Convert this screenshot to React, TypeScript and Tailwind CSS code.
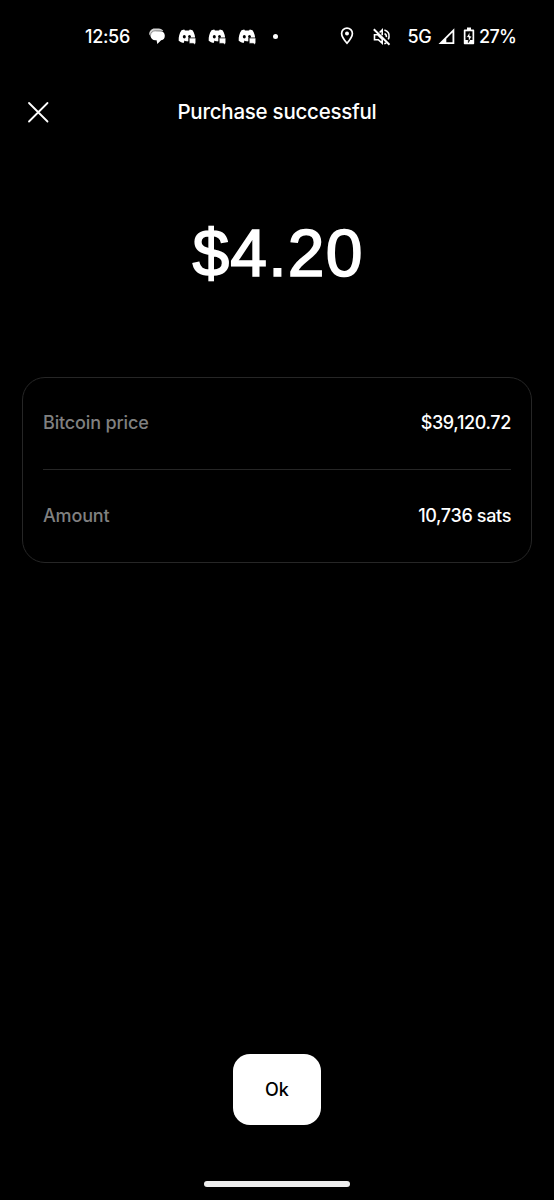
import type { ReactNode } from 'react';

function ChatIcon() {
  return (
    <svg className="ml-[17px] h-[18px] w-[18px] shrink-0" viewBox="0 0 18 18" fill="white">
      <path d="M1.200 7.200C1.200 4 3.600 1.500 6.500 1.500h4.200c2 0 3.700.9 4.600 2.500l-9 1L3.200 10.500Z" fill="#d4d4d4" />
      <path d="M7.300 4.200h5.200a4.600 4.600 0 0 1 .6 9.100l-3.800 3.700-.7-3.700H7.300a4.650 4.650 0 0 1 0-9.300Z" />
      <path d="M2.500 10V8.600C2.500 5.800 4.500 3.800 7.300 3.800h6.500" fill="none" stroke="#444" strokeWidth=".5" />
    </svg>
  );
}

function DiscordIcon() {
  return (
    <svg className="h-[18px] w-[20px] shrink-0" viewBox="0 0 20 18" fill="white">
      <path d="M4.500 2.300 7.200 1.400l.8 1h4l.8-1 2.700.9c1.600 2.400 2.500 5 2.600 7.500h-6.700v4.100l-3.700-.8L6.500 15c-1.700-.3-3.300-1-4.800-2.200-.2-4 .7-7.500 2.800-10.500Z" />
      <ellipse cx="7.300" cy="8.800" rx="1.500" ry="1.700" fill="black" />
      <ellipse cx="12.500" cy="8.500" rx="1.400" ry="1.500" fill="black" />
      <path d="M7 13.100c2 .8 3.400.8 5 .4" fill="none" stroke="black" strokeWidth=".8" />
      <path d="M12.200 10h6.600v5.400h-.8v1.600l-1.600-1.600h-4.200Z" stroke="black" strokeWidth=".6" />
    </svg>
  );
}

function PinIcon() {
  return (
    <svg className="h-[20px] w-[14px] shrink-0" viewBox="0 0 14 20" fill="none" stroke="white" strokeWidth="1.700">
      <path d="M7 17.300C3.600 13.400 1.600 10.400 1.600 7.500a5.400 5.400 0 0 1 10.800 0c0 2.900-2 5.900-5.400 9.800Z" />
      <circle cx="7" cy="7.500" r="2" fill="white" stroke="none" />
    </svg>
  );
}

function MutedIcon() {
  return (
    <svg className="ml-[18px] mt-[1px] h-[20px] w-[20px] shrink-0" viewBox="0 0 20 20" fill="none" stroke="white" strokeWidth="1.600">
      <path d="M2.500 7.700h3.200l4.500 4.500v4L6.300 12.700H2.500Z" />
      <path d="M7.600 5.500 10.200 3v5.200M12.600 6.500c1.300.7 2 2 1.900 3.600M12.400 2.900c3.500 1 5.100 4 4.600 7.200-.1.900-.4 1.600-.8 2.300M12.300 16.800l2-.8" />
      <path d="m1.800 2.300 15.700 15.400" strokeWidth="1.900" />
    </svg>
  );
}

function SignalIcon() {
  return (
    <svg className="ml-[5px] h-[18px] w-[17px] shrink-0" viewBox="0 0 17 18">
      <path d="M.5 17 16.300 1.200V17Z" fill="white" />
      <path d="M8.300 11.700 14.500 5.500v9.700H8.300Z" fill="black" />
    </svg>
  );
}

function BatteryIcon() {
  return (
    <svg className="ml-[8px] h-[20px] w-[12px] shrink-0" viewBox="0 0 12 20">
      <path d="M4 1.500h4v2h2.500c.4 0 .7.3.7.700v13.300c0 .4-.3.700-.7.700h-9c-.4 0-.7-.3-.7-.7V4.200c0-.4.300-.7.700-.7H4Z" fill="white" />
      <path d="M2.500 5.300h7v8.700h-7Z" fill="black" />
      <path d="M6.900 5.700 3.200 11.500h2.200v5l3.600-6.500H6.900Z" fill="white" stroke="black" strokeWidth=".8" />
    </svg>
  );
}

function StatusBar() {
  return (
    <header className="flex h-[72px] shrink-0 items-center pl-[85px] text-[18px] font-[450]">
      <span className="w-[46px] whitespace-nowrap tracking-[-0.3px]">12:56</span>
      <ChatIcon />
      <div className="ml-[11px] flex gap-[10px] pt-[2px]">
        <DiscordIcon />
        <DiscordIcon />
        <DiscordIcon />
      </div>
      <span className="ml-[16px] size-[5px] shrink-0 rounded-full bg-white" />
      <div className="ml-[61.5px] flex items-center">
        <PinIcon />
        <MutedIcon />
        <span className="ml-[16px] w-[25px] whitespace-nowrap tracking-[-0.5px]">5G</span>
        <SignalIcon />
        <BatteryIcon />
        <span className="ml-[4.500px] whitespace-nowrap tracking-[-0.7px]">27%</span>
      </div>
    </header>
  );
}

function DetailRow({ label, children }: { label: string; children: ReactNode }) {
  return (
    <div className="flex items-center justify-between text-[18px] leading-[26px]">
      <dt className="font-medium tracking-[-0.15px] text-[#808080]">{label}</dt>
      <dd className="font-medium tracking-[-0.35px]">{children}</dd>
    </div>
  );
}

export default function App() {
  return (
    <main className="flex h-[1200px] w-[554px] flex-col overflow-hidden bg-black font-['Inter',sans-serif] text-white">
      <StatusBar />
      <div className="grid h-[80px] shrink-0 grid-cols-[78px_1fr_78px] items-center">
        <button aria-label="Close" className="ml-[27px] size-[22px]">
          <svg viewBox="0 0 22 22" fill="none" stroke="white" strokeWidth="1.800" strokeLinecap="round">
            <path d="m2 2 18.500 18.500M20.500 2 2 20.500" />
          </svg>
        </button>
        <h1 className="text-center text-[20.5px] font-[450] tracking-[-0.25px]">Purchase successful</h1>
      </div>
      <div className="mt-[61px] flex h-[80px] shrink-0 items-center justify-center pl-[2px] font-['Liberation_Sans',sans-serif] text-[66px] leading-[80px] tracking-[1.2px] [-webkit-text-stroke:1.6px_white]">
        $4.20
      </div>
      <dl className="mx-[22px] mt-[84px] grid h-[186px] shrink-0 grid-rows-[91px_1px_92px] rounded-[23px] border border-[#262626] px-[20px] [&>div:first-child]:pb-[2px]">
        <DetailRow label="Bitcoin price">$39,120.72</DetailRow>
        <div className="bg-[#262626]" />
        <DetailRow label="Amount">10,736 sats</DetailRow>
      </dl>
      <div className="mt-auto flex flex-col items-center">
        <button className="h-[71px] w-[88px] rounded-[17px] bg-white text-[18px] font-[450] text-black">Ok</button>
        <div className="mb-[13px] mt-[56px] h-[6px] w-[146px] rounded-full bg-[#eee]" />
      </div>
    </main>
  );
}
